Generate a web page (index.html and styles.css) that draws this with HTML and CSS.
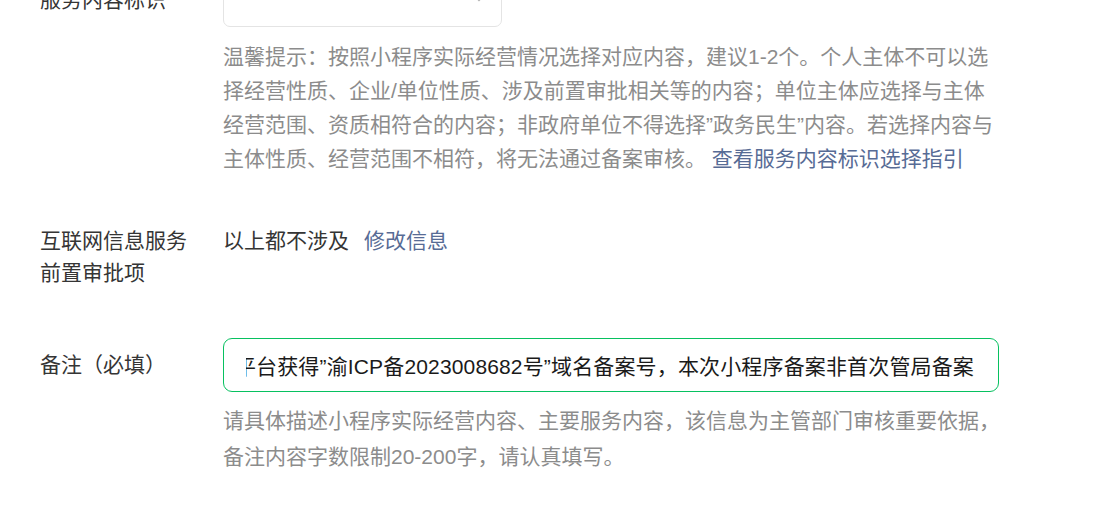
FILE: index.html
```html
<!DOCTYPE html>
<html lang="zh-CN">
<head>
    <meta charset="UTF-8">
    <meta name="viewport" content="width=device-width, initial-scale=1.0">
    <title>小程序备案 - 填写信息</title>
    <link rel="stylesheet" href="styles.css">
</head>
<body>
    <div class="form">
        <div class="row">
            <div class="label">服务内容标识</div>
            <div class="field">
                <div class="select">
                    <svg class="arrow" width="12" height="8" viewBox="0 0 12 8">
                        <path d="M1 1.5l5 5 5-5" fill="none" stroke="#b2b2b2" stroke-width="1.4"/>
                    </svg>
                </div>
                <p class="hint">温馨提示：按照小程序实际经营情况选择对应内容，建议1-2个。个人主体不可以选择经营性质、企业/单位性质、涉及前置审批相关等的内容；单位主体应选择与主体经营范围、资质相符合的内容；非政府单位不得选择”政务民生”内容。若选择内容与主体性质、经营范围不相符，将无法通过备案审核。 <a class="link" href="#">查看服务内容标识选择指引</a></p>
            </div>
        </div>

        <div class="row">
            <div class="label">互联网信息服务前置审批项</div>
            <div class="field plain">
                <span>以上都不涉及</span>
                <a class="link" href="#">修改信息</a>
            </div>
        </div>

        <div class="row">
            <div class="label">备注（必填）</div>
            <div class="field">
                <div class="input">
                    <div class="input-view">
                        <span class="input-text">本小程序为个人开发，所属平台获得”渝ICP备2023008682号”域名备案号，本次小程序备案非首次管局备案</span>
                    </div>
                </div>
                <p class="hint">请具体描述小程序实际经营内容、主要服务内容，该信息为主管部门审核重要依据，备注内容字数限制20-200字，请认真填写。</p>
            </div>
        </div>
    </div>
</body>
</html>
```

FILE: styles.css
```css
body {
    margin: 0;
    background: #fff;
    font-family: "Liberation Sans", "Noto Sans CJK SC", sans-serif;
    font-size: 21px;
    color: #353535;
}

.form {
    margin-top: -27px;
    padding-left: 40px;
}

.row {
    display: flex;
    padding-bottom: 49px;
}

.label {
    width: 150px;
    flex-shrink: 0;
    margin-right: 33px;
    padding-top: 11px;
    line-height: 32px;
}

.row:nth-child(2) .label {
    padding-top: 0;
}

.field {
    width: 780px;
}

.field.plain {
    line-height: 32px;
    display: flex;
    gap: 15px;
}

.select {
    width: 277px;
    height: 52px;
    border: 1px solid #e4e4e4;
    border-radius: 7px;
    position: relative;
}

.arrow {
    position: absolute;
    right: 16px;
    top: 20px;
}

.hint {
    margin: 13px 0 0;
    color: #8c8c8c;
    line-height: 34px;
}

.row:nth-child(3) .hint {
    margin-top: 11px;
    line-height: 36px;
}

.link {
    color: #576b95;
    text-decoration: none;
}

.input {
    width: 776px;
    height: 54px;
    box-sizing: border-box;
    border: 1px solid #07c160;
    border-radius: 9px;
    padding: 0 24px 0 22px;
    display: flex;
    align-items: center;
}

.input-view {
    flex: 1;
    overflow: hidden;
    display: flex;
    justify-content: flex-end;
}

.input-text {
    flex-shrink: 0;
    white-space: nowrap;
    letter-spacing: 0.15px;
    color: #1a1a1a;
}
```
